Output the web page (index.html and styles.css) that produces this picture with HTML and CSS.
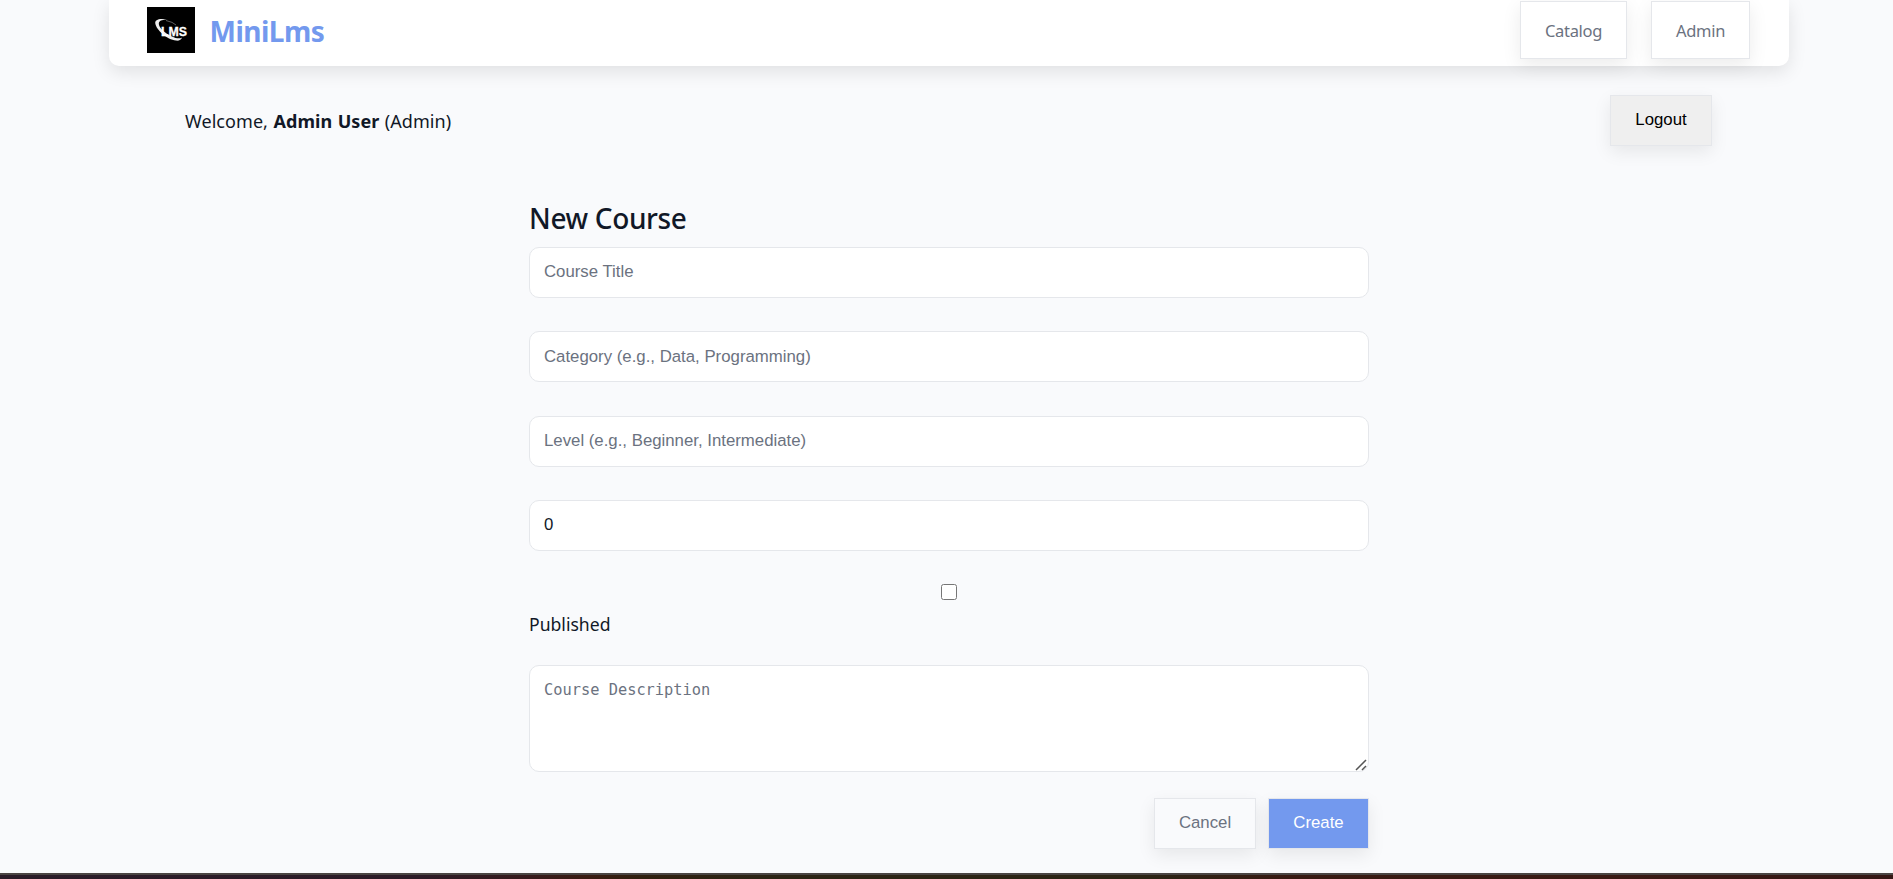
FILE: index.html
```html
<!DOCTYPE html>
<html lang="en">
<head>
<meta charset="utf-8">
<title>MiniLms</title>
<link rel="stylesheet" href="styles.css">
</head>
<body>
<header class="navbar">
  <a class="brand">
    <svg class="logo" viewBox="0 0 48 46" width="48" height="46">
      <rect width="48" height="46" fill="#000"/>
      <path d="M21 13C14 10.800 7.500 12 8.300 16.500C9.300 23 20 32.500 29 33.600C32 34 34.600 32.500 35 30.500C33 32 29 31.500 25 29.500C18 26.500 11.500 20.500 11.800 16.500C12 13.300 17 12.400 21 13Z" fill="#eee"/>
      <path d="M19 13.500q7 1.500 10 4.500" fill="none" stroke="#777" stroke-width=".8"/>
      <text class="logo-text" x="14" y="28.500" textLength="26" lengthAdjust="spacingAndGlyphs">LMS</text>
    </svg>
    <span class="brand-name">MiniLms</span>
  </a>
  <nav class="nav-links">
    <a class="btn nav-btn catalog">Catalog</a>
    <a class="btn nav-btn admin">Admin</a>
  </nav>
</header>
<div class="userbar">
  <p class="welcome">Welcome, <strong>Admin User</strong> (Admin)</p>
  <button class="btn logout">Logout</button>
</div>
<main class="course-form">
  <h2 class="form-title">New Course</h2>
  <input class="field" type="text" placeholder="Course Title">
  <input class="field lower" type="text" placeholder="Category (e.g., Data, Programming)">
  <input class="field" type="text" placeholder="Level (e.g., Beginner, Intermediate)">
  <input class="field" type="text" value="0">
  <input class="check" id="published" type="checkbox">
  <label class="check-label" for="published">Published</label>
  <div class="area-wrap">
    <textarea class="field area" placeholder="Course Description"></textarea>
    <svg class="grip" viewBox="0 0 12 12" width="12" height="12"><path d="M1 11L11 1M7 11L11 7" fill="none" stroke="#555" stroke-width="1.500"/></svg>
  </div>
  <div class="actions">
    <button class="btn cancel">Cancel</button>
    <button class="btn create">Create</button>
  </div>
</main>
<footer class="strip"></footer>
</body>
</html>
```
FILE: styles.css
```css
* { box-sizing: border-box; }
body {
  margin: 0;
  height: 879px;
  overflow: hidden;
  display: flex;
  flex-direction: column;
  background: #f9fafc;
  color: #111827;
  font: 17.6px/28px "Noto Sans", sans-serif;
}
.navbar {
  flex: none;
  width: 1680px;
  height: 66px;
  margin-left: 109px;
  padding: 1px 39px 0 38px;
  display: flex;
  justify-content: space-between;
  align-items: flex-start;
  background: #fff;
  border-radius: 0 0 10px 10px;
  box-shadow: 0 6px 18px rgba(0, 0, 0, .1);
}
.brand { display: flex; gap: 14.500px; padding-top: 6px; }
.logo { display: block; }
.logo-text { font: bold 12.500px "Liberation Sans", sans-serif; fill: #fff; stroke: #fff; stroke-width: .3px; }
.brand-name { font-size: 28px; line-height: 48px; font-weight: 700; color: #7399ee; letter-spacing: -.5px; }
.nav-links { display: flex; gap: 24px; }
.btn {
  display: flex;
  align-items: center;
  justify-content: center;
  height: 51px;
  padding: 0 0 1px;
  border: 1px solid #e5e7eb;
  border-radius: 0;
  box-shadow: 0 6px 18px rgba(0, 0, 0, .08);
  font: 16.8px "Liberation Sans", sans-serif;
  color: #6b7280;
  background: transparent;
}
.nav-btn { height: 58px; padding: 0; font: 16.5px "Noto Sans", sans-serif; letter-spacing: -.3px; background: #fff; }
.catalog { width: 107px; }
.admin { width: 99px; }
.userbar {
  flex: none;
  height: 51px;
  margin: 29px 181px 0 185px;
  display: flex;
  justify-content: space-between;
}
.welcome { margin: 0; font-size: 18px; line-height: 52px; letter-spacing: .06px; word-spacing: .7px; white-space: nowrap; }
.logout { width: 102px; background: #efefef; color: #000; }
.course-form { flex: none; width: 840px; margin: 53px 0 0 529px; display: flex; flex-direction: column; }
.form-title { margin: 0; height: 48px; font-size: 28px; line-height: 39px; font-weight: 500; letter-spacing: -.35px; }
.field {
  display: block;
  width: 840px;
  height: 51px;
  margin: 0 0 33.3px;
  padding: 0 14px 1px;
  border: 1px solid #e5e7eb;
  border-radius: 10px;
  background: #fff;
  color: #111827;
  font: 16.8px "Liberation Sans", sans-serif;
}
.lower { padding-bottom: 0; }
.field::placeholder { color: #6b7280; opacity: 1; }
.check { width: 16px; height: 16px; margin: 0 auto; }
.check-label { margin: 10px 0 27px; height: 28px; }
.area-wrap { position: relative; height: 107px; margin-bottom: 26px; }
.area { height: 107px; margin: 0; padding: 14px; resize: none; font: 15.35px/20px "DejaVu Sans Mono", monospace; }
.grip { position: absolute; right: 2px; bottom: 1px; }
.actions { display: flex; justify-content: flex-end; gap: 12px; }
.cancel { width: 102px; }
.create { width: 101px; background: #7399ee; color: #fff; }
.strip {
  flex: none;
  height: 6px;
  margin-top: auto;
  border-top: 2px solid #4a4543;
  background: linear-gradient(90deg, #2a1c28 0%, #2c1b27 22%, #371a1c 28%, #3a1c12 31%, #30200f 34%, #2c2415 40%, #2c2415 61%, #381a12 68%, #3a1a14 85%, #351714 100%);
}
```
